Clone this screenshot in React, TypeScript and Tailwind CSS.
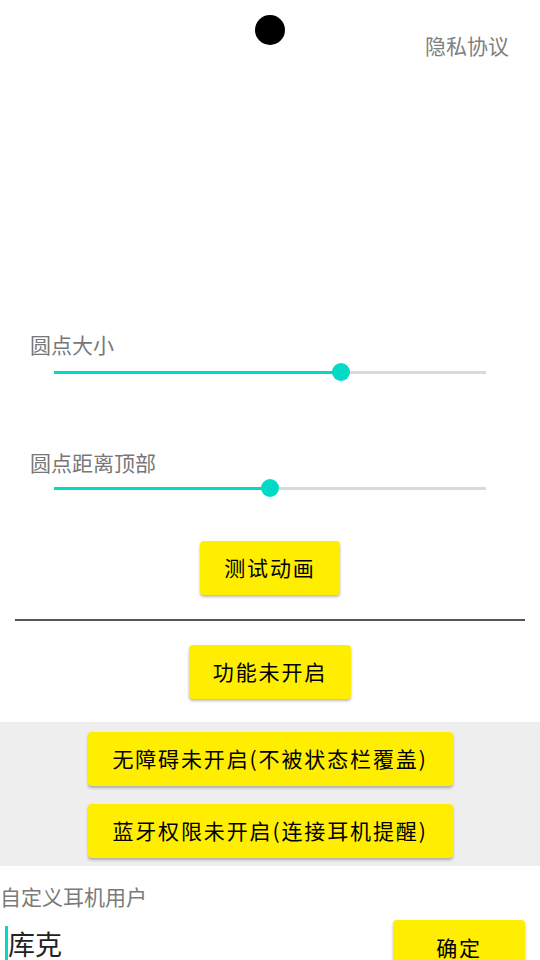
import React from "react";

const font = { fontFamily: '"Noto Sans CJK SC", "Noto Sans", sans-serif' };

function Slider({ value }: { value: number }) {
  return (
    <div className="relative mx-[54px] h-[18px] flex items-center">
      <div className="flex w-full h-[3px]">
        <div className="h-full bg-[#03dac5]" style={{ width: `${value * 100}%` }} />
        <div className="h-full flex-1 bg-[#d9d9d9]" />
      </div>
      <div
        className="absolute top-0 w-[18px] h-[18px] -ml-[9px] rounded-full bg-[#03dac5]"
        style={{ left: `${value * 100}%` }}
      />
    </div>
  );
}

function YButton({ children, className = "" }: { children: React.ReactNode; className?: string }) {
  return (
    <button
      className={`h-[54px] px-[24px] rounded-[4px] bg-[#ffee00] text-black text-[21px] tracking-[1.87px] shadow-[0_2px_3px_rgba(0,0,0,0.28)] flex items-center justify-center ${className}`}
    >
      {children}
    </button>
  );
}

export default function App() {
  return (
    <div className="relative w-[540px] h-[960px] overflow-hidden bg-white" style={font}>
      <div className="absolute left-[255px] top-[15px] w-[30px] h-[30px] rounded-full bg-black" />
      <div className="h-[330px] flex justify-end pr-[31px] pt-[31px]">
        <span className="text-[21px] leading-[28px] text-[#7f7f7f]">隐私协议</span>
      </div>
      <div className="pl-[30px] text-[21px] leading-[28px] text-[#777777]">圆点大小</div>
      <div className="mt-[5px]">
        <Slider value={0.664} />
      </div>
      <div className="mt-[67px] pl-[30px] text-[21px] leading-[28px] text-[#777777]">圆点距离顶部</div>
      <div className="mt-[3px]">
        <Slider value={0.5} />
      </div>
      <div className="mt-[44px] flex justify-center">
        <YButton>测试动画</YButton>
      </div>
      <div className="mt-[24px] mx-[15px] h-[2px] bg-[#555555]" />
      <div className="mt-[24px] flex justify-center">
        <YButton>功能未开启</YButton>
      </div>
      <div className="mt-[23px] bg-[#eeeeee] pt-[10px] pb-[8px] flex flex-col items-center gap-[18px]">
        <YButton className="w-[365px] px-0">无障碍未开启(不被状态栏覆盖)</YButton>
        <YButton className="w-[365px] px-0">蓝牙权限未开启(连接耳机提醒)</YButton>
      </div>
      <div className="mt-[16px] text-[21px] leading-[28px] text-[#7a7a7a]">自定义耳机用户</div>
      <div className="mt-[10px] flex items-start">
        <div className="flex-1 flex items-start pl-[5px] pt-[4px]">
          <div className="w-[3px] h-[36px] mt-[2px] bg-[#03dac5]" />
          <span className="text-[27px] leading-[40px] text-[#222222]">库克</span>
        </div>
        <YButton className="w-[132px] mr-[15px] items-start pt-[12px]">确定</YButton>
      </div>
    </div>
  );
}
